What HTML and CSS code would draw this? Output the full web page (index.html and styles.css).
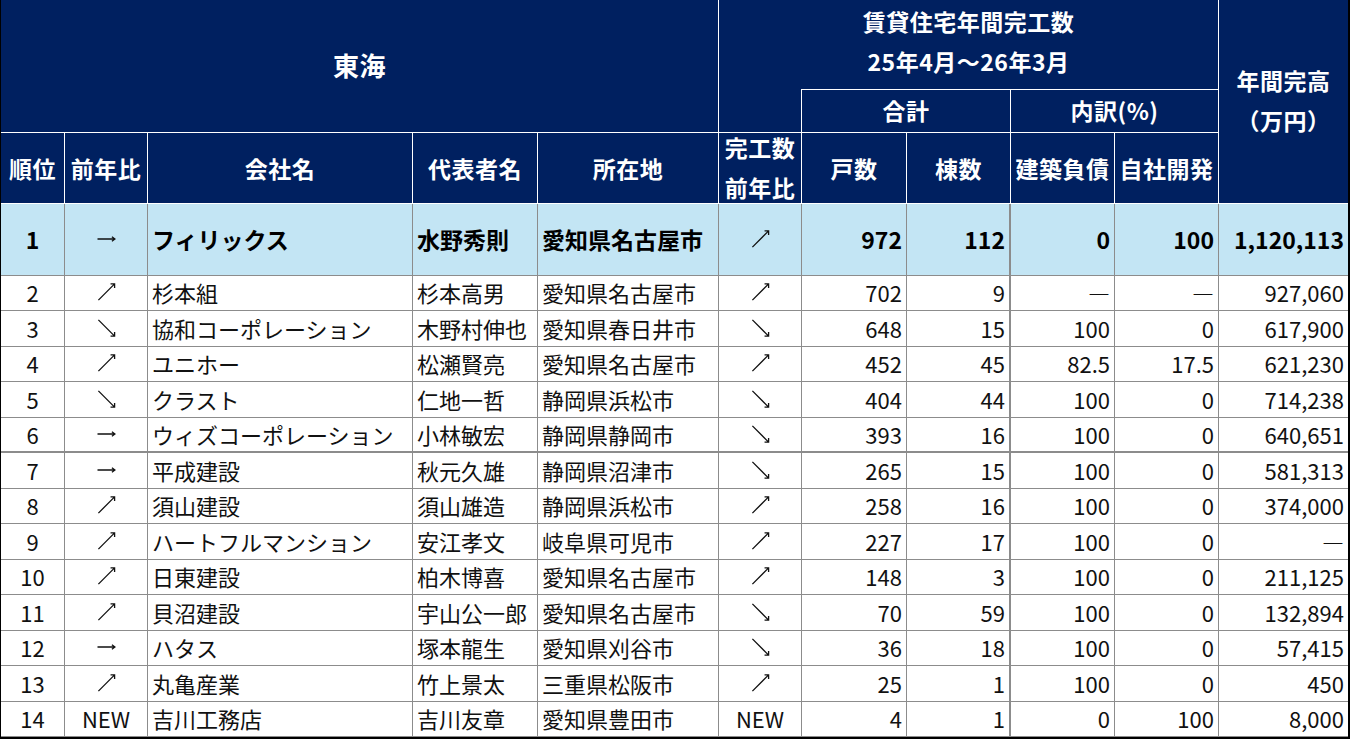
FILE: index.html
```html
<!DOCTYPE html>
<html lang="ja">
<head>
<meta charset="utf-8">
<title>東海 賃貸住宅年間完工数</title>
<link rel="stylesheet" href="styles.css">
</head>
<body>
<svg class="defs" width="0" height="0" aria-hidden="true">
  <symbol id="up" viewBox="0 0 20 20"><path d="M1 19 L19 1 M14.5 1 L19 1 L19 5.5" fill="none" stroke="currentColor" stroke-width="1.45"/></symbol>
  <symbol id="dn" viewBox="0 0 20 20"><path d="M1 1 L19 19 M19 14.5 L19 19 L14.5 19" fill="none" stroke="currentColor" stroke-width="1.45"/></symbol>
  <symbol id="rt" viewBox="0 0 20 20"><path d="M0 10 L19.5 10 M16 7.5 L19.5 10 L16 12.5" fill="none" stroke="currentColor" stroke-width="1.45"/></symbol>
</svg>
<div class="sheet">
  <div class="h region">東海</div>
  <div class="h title"><span>賃貸住宅年間完工数</span><span>25年4月～26年3月</span></div>
  <div class="h total"><span>年間完高</span><span>（万円）</span></div>
  <div class="h blank"></div>
  <div class="h sum">合計</div>
  <div class="h split">内訳(%)</div>
  <div class="h">順位</div>
  <div class="h">前年比</div>
  <div class="h">会社名</div>
  <div class="h">代表者名</div>
  <div class="h">所在地</div>
  <div class="h two"><span>完工数</span><span>前年比</span></div>
  <div class="h">戸数</div>
  <div class="h">棟数</div>
  <div class="h">建築負債</div>
  <div class="h">自社開発</div>

  <div class="c top ctr">1</div><div class="c top ctr"><svg class="arw"><use href="#rt"/></svg></div><div class="c top">フィリックス</div><div class="c top">水野秀則</div><div class="c top">愛知県名古屋市</div><div class="c top ctr"><svg class="arw"><use href="#up"/></svg></div><div class="c top num">972</div><div class="c top num thick">112</div><div class="c top num">0</div><div class="c top num">100</div><div class="c top num last">1,120,113</div>

  <div class="c ctr">2</div><div class="c ctr"><svg class="arw"><use href="#up"/></svg></div><div class="c">杉本組</div><div class="c">杉本高男</div><div class="c">愛知県名古屋市</div><div class="c ctr"><svg class="arw"><use href="#up"/></svg></div><div class="c num">702</div><div class="c num thick">9</div><div class="c num">―</div><div class="c num">―</div><div class="c num last">927,060</div>

  <div class="c ctr">3</div><div class="c ctr"><svg class="arw"><use href="#dn"/></svg></div><div class="c">協和コーポレーション</div><div class="c">木野村伸也</div><div class="c">愛知県春日井市</div><div class="c ctr"><svg class="arw"><use href="#dn"/></svg></div><div class="c num">648</div><div class="c num thick">15</div><div class="c num">100</div><div class="c num">0</div><div class="c num last">617,900</div>

  <div class="c ctr">4</div><div class="c ctr"><svg class="arw"><use href="#up"/></svg></div><div class="c">ユニホー</div><div class="c">松瀬賢亮</div><div class="c">愛知県名古屋市</div><div class="c ctr"><svg class="arw"><use href="#up"/></svg></div><div class="c num">452</div><div class="c num thick">45</div><div class="c num">82.5</div><div class="c num">17.5</div><div class="c num last">621,230</div>

  <div class="c ctr">5</div><div class="c ctr"><svg class="arw"><use href="#dn"/></svg></div><div class="c">クラスト</div><div class="c">仁地一哲</div><div class="c">静岡県浜松市</div><div class="c ctr"><svg class="arw"><use href="#dn"/></svg></div><div class="c num">404</div><div class="c num thick">44</div><div class="c num">100</div><div class="c num">0</div><div class="c num last">714,238</div>

  <div class="c ctr sep">6</div><div class="c ctr sep"><svg class="arw"><use href="#rt"/></svg></div><div class="c sep">ウィズコーポレーション</div><div class="c sep">小林敏宏</div><div class="c sep">静岡県静岡市</div><div class="c ctr sep"><svg class="arw"><use href="#dn"/></svg></div><div class="c num sep">393</div><div class="c num thick sep">16</div><div class="c num sep">100</div><div class="c num sep">0</div><div class="c num last sep">640,651</div>

  <div class="c ctr">7</div><div class="c ctr"><svg class="arw"><use href="#rt"/></svg></div><div class="c">平成建設</div><div class="c">秋元久雄</div><div class="c">静岡県沼津市</div><div class="c ctr"><svg class="arw"><use href="#dn"/></svg></div><div class="c num">265</div><div class="c num thick">15</div><div class="c num">100</div><div class="c num">0</div><div class="c num last">581,313</div>

  <div class="c ctr">8</div><div class="c ctr"><svg class="arw"><use href="#up"/></svg></div><div class="c">須山建設</div><div class="c">須山雄造</div><div class="c">静岡県浜松市</div><div class="c ctr"><svg class="arw"><use href="#up"/></svg></div><div class="c num">258</div><div class="c num thick">16</div><div class="c num">100</div><div class="c num">0</div><div class="c num last">374,000</div>

  <div class="c ctr">9</div><div class="c ctr"><svg class="arw"><use href="#up"/></svg></div><div class="c">ハートフルマンション</div><div class="c">安江孝文</div><div class="c">岐阜県可児市</div><div class="c ctr"><svg class="arw"><use href="#up"/></svg></div><div class="c num">227</div><div class="c num thick">17</div><div class="c num">100</div><div class="c num">0</div><div class="c num last">―</div>

  <div class="c ctr">10</div><div class="c ctr"><svg class="arw"><use href="#up"/></svg></div><div class="c">日東建設</div><div class="c">柏木博喜</div><div class="c">愛知県名古屋市</div><div class="c ctr"><svg class="arw"><use href="#up"/></svg></div><div class="c num">148</div><div class="c num thick">3</div><div class="c num">100</div><div class="c num">0</div><div class="c num last">211,125</div>

  <div class="c ctr">11</div><div class="c ctr"><svg class="arw"><use href="#up"/></svg></div><div class="c">貝沼建設</div><div class="c">宇山公一郎</div><div class="c">愛知県名古屋市</div><div class="c ctr"><svg class="arw"><use href="#dn"/></svg></div><div class="c num">70</div><div class="c num thick">59</div><div class="c num">100</div><div class="c num">0</div><div class="c num last">132,894</div>

  <div class="c ctr">12</div><div class="c ctr"><svg class="arw"><use href="#rt"/></svg></div><div class="c">ハタス</div><div class="c">塚本龍生</div><div class="c">愛知県刈谷市</div><div class="c ctr"><svg class="arw"><use href="#dn"/></svg></div><div class="c num">36</div><div class="c num thick">18</div><div class="c num">100</div><div class="c num">0</div><div class="c num last">57,415</div>

  <div class="c ctr">13</div><div class="c ctr"><svg class="arw"><use href="#up"/></svg></div><div class="c">丸亀産業</div><div class="c">竹上景太</div><div class="c">三重県松阪市</div><div class="c ctr"><svg class="arw"><use href="#up"/></svg></div><div class="c num">25</div><div class="c num thick">1</div><div class="c num">100</div><div class="c num">0</div><div class="c num last">450</div>

  <div class="c ctr">14</div><div class="c ctr">NEW</div><div class="c">吉川工務店</div><div class="c">吉川友章</div><div class="c">愛知県豊田市</div><div class="c ctr">NEW</div><div class="c num">4</div><div class="c num thick">1</div><div class="c num">0</div><div class="c num">100</div><div class="c num last">8,000</div>
</div>
</body>
</html>
```

FILE: styles.css
```css
html, body {
  margin: 0;
  padding: 0;
  background: #ffffff;
}

body {
  font-family: "Noto Sans CJK JP", "Noto Sans", sans-serif;
  color: #111111;
}

.defs {
  position: absolute;
  width: 0;
  height: 0;
  overflow: hidden;
}

.sheet {
  display: grid;
  width: 1350px;
  box-sizing: border-box;
  border-left: 1px solid #000000;
  border-right: 2px solid #000000;
  border-bottom: 2px solid #000000;
  grid-template-columns: 64px 83px 265px 125px 181px 83px 105px 104px 104px 104px 129px;
  grid-template-rows: 89px 44px 71px 72px 35px 36px 35px 36px 35px 36px 35px 36px 35px 36px 35px 36px 35px;
}

.h {
  box-sizing: border-box;
  background: #002060;
  color: #ffffff;
  font-weight: 700;
  font-size: 23px;
  line-height: 40px;
  border-right: 1px solid #ffffff;
  border-bottom: 1px solid #ffffff;
  display: flex;
  flex-direction: column;
  align-items: center;
  justify-content: center;
  white-space: nowrap;
  letter-spacing: 0.5px;
}

.h.region {
  grid-column: 1 / 6;
  grid-row: 1 / 3;
  font-size: 26px;
  padding-bottom: 3px;
}

.h.title {
  grid-column: 6 / 11;
  grid-row: 1 / 2;
  border-bottom: none;
  padding-bottom: 8px;
}

.h.total {
  grid-column: 11 / 12;
  grid-row: 1 / 4;
  border-right: none;
  padding-bottom: 4px;
}

.h.blank {
  grid-column: 6 / 7;
  grid-row: 2 / 3;
  border-bottom: 1px solid #ffffff;
}

.h.sum {
  grid-column: 7 / 9;
  grid-row: 2 / 3;
  border-top: 1px solid #ffffff;
  padding-bottom: 3px;
}

.h.split {
  grid-column: 9 / 11;
  grid-row: 2 / 3;
  border-top: 1px solid #ffffff;
  padding-bottom: 3px;
}

.h.two {
  padding-bottom: 2px;
}

.c {
  box-sizing: border-box;
  font-size: 22px;
  border-right: 1px solid #8c8c8c;
  border-bottom: 1px solid #8c8c8c;
  display: flex;
  align-items: center;
  padding: 0 4px 2px 4px;
  white-space: nowrap;
  overflow: hidden;
  color: #111111;
}

.c.top {
  background: #c3e5f4;
  font-weight: 700;
  font-size: 23px;
  color: #000000;
}

.c.ctr {
  justify-content: center;
}

.c.num {
  justify-content: flex-end;
}

.c.thick {
  border-right: 2px solid #8c8c8c;
}

.c.last {
  border-right: none;
}

.c.sep {
  border-bottom: 2px solid #8c8c8c;
}

.arw {
  width: 19px;
  height: 18px;
  color: #111111;
  flex: none;
}
```
